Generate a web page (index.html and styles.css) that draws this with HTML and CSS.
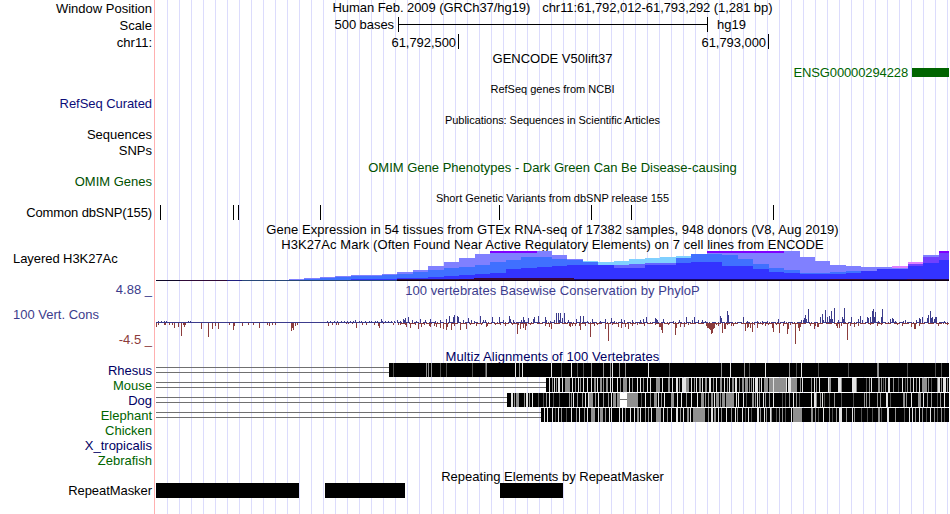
FILE: index.html
```html
<!DOCTYPE html>
<html lang="en">
<head>
<meta charset="utf-8">
<title>Genome tracks chr11:61,792,012-61,793,292</title>
<link rel="stylesheet" href="styles.css">
</head>
<body>
<main class="browser">
  <div class="row h17"><div class="label low">Window Position</div><div class="track caption position tight"><span>Human Feb. 2009 (GRCh37/hg19)</span><span>chr11:61,792,012-61,793,292 (1,281 bp)</span></div></div>
  <div class="row h18"><div class="label low">Scale</div><div class="track scale"><span class="scale-size tight">500 bases</span><i class="scale-bar"><b></b></i><span>hg19</span></div></div>
  <div class="row h16"><div class="label">chr11:</div><div class="track ruler tight"><span class="tick first">61,792,500</span><span class="tick">61,793,000</span></div></div>
  <div class="row h14"><div class="label"></div><div class="track caption">GENCODE V50lift37</div></div>
  <div class="row h16"><div class="label"></div><div class="track gene"><span class="tighter">ENSG00000294228</span><i class="exon"></i></div></div>
  <div class="row h15"><div class="label"></div><div class="track caption small">RefSeq genes from NCBI</div></div>
  <div class="row h16"><div class="label navy tight">RefSeq Curated</div></div>
  <div class="row h15"><div class="label"></div><div class="track caption small tight">Publications: Sequences in Scientific Articles</div></div>
  <div class="row h16"><div class="label">Sequences</div></div>
  <div class="row h17"><div class="label">SNPs</div></div>
  <div class="row h14"><div class="label"></div><div class="track caption green">OMIM Gene Phenotypes - Dark Green Can Be Disease-causing</div></div>
  <div class="row h16"><div class="label green">OMIM Genes</div></div>
  <div class="row h15"><div class="label"></div><div class="track caption small">Short Genetic Variants from dbSNP release 155</div></div>
  <div class="row h17"><div class="label tighter">Common dbSNP(155)</div><svg class="track" id="snps" viewBox="156 0 793 17" width="793" height="17"></svg></div>
  <div class="row h15"><div class="label"></div><div class="track caption wide">Gene Expression in 54 tissues from GTEx RNA-seq of 17382 samples, 948 donors (V8, Aug 2019)</div></div>
  <div class="row h14"><div class="label"></div><div class="track caption wide">H3K27Ac Mark (Often Found Near Active Regulatory Elements) on 7 cell lines from ENCODE</div></div>
  <div class="row h31"><div class="label left tight">Layered H3K27Ac</div><svg class="track" id="histone" viewBox="156 251 793 31" width="793" height="31"></svg></div>
  <div class="row h16"><div class="label violet">4.88 _</div><div class="track caption low wide violet">100 vertebrates Basewise Conservation by PhyloP</div></div>
  <div class="row h51"><div class="label limits"><span class="left violet">100 Vert. Cons</span><span class="brown">-4.5 _</span></div><svg class="track" id="phylop" viewBox="156 298 793 51" width="793" height="51"></svg></div>
  <div class="row h14"><div class="label"></div><div class="track caption wider blue">Multiz Alignments of 100 Vertebrates</div></div>
  <div class="row h15"><div class="label blue">Rhesus</div><svg class="track" id="rhesus" viewBox="156 0 793 15" width="793" height="15"></svg></div>
  <div class="row h15"><div class="label leaf">Mouse</div><svg class="track" id="mouse" viewBox="156 0 793 15" width="793" height="15"></svg></div>
  <div class="row h15"><div class="label blue">Dog</div><svg class="track" id="dog" viewBox="156 0 793 15" width="793" height="15"></svg></div>
  <div class="row h15"><div class="label leaf">Elephant</div><svg class="track" id="elephant" viewBox="156 0 793 15" width="793" height="15"></svg></div>
  <div class="row h15"><div class="label leaf">Chicken</div></div>
  <div class="row h15"><div class="label blue">X_tropicalis</div></div>
  <div class="row h16"><div class="label leaf">Zebrafish</div></div>
  <div class="row h14"><div class="label"></div><div class="track caption">Repeating Elements by RepeatMasker</div></div>
  <div class="row h31"><div class="label tight">RepeatMasker</div><svg class="track" id="repeats" viewBox="156 0 793 31" width="793" height="31"></svg></div>
</main>
<script src="tracks.js"></script>
</body>
</html>
```
FILE: styles.css
```css
* { box-sizing: border-box; }
body { margin: 0; background: #fff; }
.browser {
  width: 949px;
  height: 514px;
  overflow: hidden;
  color: #000;
  font: 13px/15px "Liberation Sans", Arial, sans-serif;
  background:
    linear-gradient(#ffb0b0, #ffb0b0) 154px 0 / 1px 100% no-repeat,
    repeating-linear-gradient(90deg, transparent 0 11px, #dcdcfc 11px 12px) 156px 0 / 793px 100% no-repeat;
}
.row { display: grid; grid-template-columns: 153px 793px; column-gap: 3px; align-items: start; white-space: nowrap; }
.h14 { height: 14px; }
.h15 { height: 15px; }
.h16 { height: 16px; }
.h17 { height: 17px; }
.h18 { height: 18px; }
.h31 { height: 31px; }
.h51 { height: 51px; }
.label { text-align: right; padding-right: 1px; min-height: 14px; }
.left { text-align: left; padding-left: 13px; }
.low { padding-top: 1px; }
.caption { text-align: center; }
.small { font-size: 11px; padding-top: 1px; }
.tight { letter-spacing: -0.06px; }
.tighter { letter-spacing: -0.12px; }
.wide { letter-spacing: 0.056px; }
.wider { letter-spacing: 0.08px; }
.position { display: flex; justify-content: center; gap: 12px; }
svg { display: block; shape-rendering: crispEdges; }
.scale { display: flex; }
.scale-size { width: 238px; text-align: right; }
.scale-bar { width: 310px; height: 15px; margin: 0 9px 0 4px; border: solid #000; border-width: 0 1px; }
.scale-bar b { display: block; height: 1px; margin-top: 7px; background: #000; }
.ruler { display: flex; margin-top: -1px; }
.tick { width: 310px; height: 15px; padding: 1px 2px 0 0; text-align: right; border-right: 1px solid #000; }
.first { width: 303px; }
.gene { display: flex; justify-content: flex-end; color: #006400; }
.exon { width: 37px; height: 9px; margin: 3px 0 0 4px; background: #006400; }
.limits { display: flex; flex-direction: column; padding-top: 9px; gap: 10px; }
.navy { color: #0c0c78; }
.blue { color: #000064; }
.green { color: #005000; }
.leaf { color: #006400; }
.violet { color: #3c3c8c; }
.brown { color: #8c3c3c; }
```
FILE: tracks.js
```js
const NS = "http://www.w3.org/2000/svg";
function bar(svg, x, y, w, h, fill) {
  const r = document.createElementNS(NS, "rect");
  for (const [k, v] of Object.entries({ x, y, width: w, height: h, fill })) r.setAttribute(k, v);
  svg.appendChild(r);
}
const el = id => document.getElementById(id);
const pairs = s => s.trim().split(/\s+/).map(p => p.split(":").map(Number));

// Common SNPs
[160, 233, 238, 320, 499, 591, 631, 773].forEach(x => bar(el("snps"), x, 0, 1, 15, "#000"));

// H3K27Ac: one entry per bin, pairs of layer colour and top, drawn back to front
const ink = { P: "#7f00ff", L: "#8080ff", C: "#80d0ff", M: "#4070ff", D: "#3333ff", K: "#e080ff", V: "#7040ff", U: "#6464ff" };
const bins = ("L279 L278M279 L277M278 L276M277 L275M276D279 L275M276D279 L274M275D279 L272M274D278 L270M272D278 " +
  "L266M270D277 L262M268D276 L258M267D275 L254M265D274 P251L253M262D273 P251L253M260D269 P251L253M257D268 " +
  "L251M257D267 L255M259D266 L259M260D265 C261M262D265 C262M265D265 C261U265D268 C259U264D268 C258U263D265 " +
  "C257U263D265 C256M258D263 L254M254D262 P251L253M254D262 P251L253M255D266 P251L253M259D266 P251L253M264D269 " +
  "P251L253M268D272 L251M270D273 L257M273D274 L261M273D274 L265M272D274 L266M271D273 L267D271 L267D269 " +
  "K266L268D269 K262V264D266 L255V257D263 P251V253D260").split(" ");
const edge = k => Math.round(289 + 15.47 * k);
bins.forEach((bin, k) => {
  const x = edge(k), w = Math.min(edge(k + 1), 949) - x;
  for (const [, c, y] of bin.matchAll(/([A-Z])(\d+)/g)) bar(el("histone"), x, +y, w, 281 - y, ink[c]);
});
[[156, 24, "#100828"], [180, 47, "#300a38"], [227, 15, "#202080"], [242, 155, "#284878"], [397, 552, "#100010"]]
  .forEach(([x, w, c]) => bar(el("histone"), x, 280, w, 1, c));
[[397, 62, "#301050"], [459, 115, "#3a0838"], [574, 256, "#180868"], [830, 32, "#3a0838"], [862, 45, "#180868"], [907, 16, "#3a0838"], [923, 26, "#240850"]]
  .forEach(([x, w, c]) => bar(el("histone"), x, 279, w, 1, c));
bar(el("histone"), 474, 278, 100, 1, "#3a0838");

// PhyloP scores
const up = pairs(`158:2 161:2 164:2 166:2 188:2 190:2 199:1 327:2 330:2 334:2 337:2 341:2 344:2 347:2 350:2 353:2 355:3 359:2 361:2 365:2 369:2 371:2
  375:2 377:2 381:4 382:2 385:2 388:2 391:2 394:2 397:3 400:2 403:4 404:3 405:5 408:6 412:3 416:2 420:4 425:3 430:4 435:2 440:3 446:4 449:7 453:6 454:8
  457:7 458:6 463:3 468:5 471:3 474:2 480:7 483:3 485:3 492:6 499:6 503:3 509:7 510:4 513:3 521:3 523:6 524:3 528:5 533:4 534:6 538:7 545:6 546:3 550:2
  554:3 556:10 558:10 559:3 560:10 562:5 564:10 568:3 576:4 580:7 583:7 587:2 592:4 600:2 605:4 611:5 614:2 621:4 624:3 632:3 640:3 643:4 646:6
  655:5 656:4 657:3 663:4 673:2 679:3 686:6 692:3 694:6 698:3 702:3 705:2 720:7 721:5 727:12 728:8 743:6 747:2 757:2 762:2 767:2 778:4 784:2
  801:3 803:3 804:5 805:8 806:4 808:14 820:6 822:9 823:3 825:13 827:6 829:7 830:4 831:12 832:4 834:15 838:3 842:6 843:4 844:15 851:6 858:4 860:7
  862:3 867:6 868:5 870:6 872:12 873:14 874:6 875:11 878:2 881:6 882:14 890:4 892:5 893:4 895:2 903:2 905:3 916:3 919:5 920:4 922:6 927:5 928:8
  930:12 931:5 932:6 934:4 935:6 936:6 940:1 944:2`);
const down = pairs(`156:4 158:2 164:2 165:2 169:2 172:2 174:5 178:4 181:13 183:2 184:4 185:2 201:6 208:14 212:6 215:3 218:6 229:2 233:7 234:3 242:3
  248:2 253:2 259:5 267:2 269:3 272:2 275:2 291:8 292:5 293:7 295:3 297:2 328:3 332:2 336:2 338:2 346:1 348:1 352:1 356:5 362:2 366:2 374:2 378:3 379:5
  383:1 393:2 398:2 400:2 405:2 406:4 410:5 415:2 418:6 421:4 424:2 429:3 430:4 434:3 436:4 440:5 443:6 446:7 447:4 451:7 454:3 460:7 466:6 470:2
  476:3 481:2 486:4 487:3 495:2 500:2 505:3 512:2 517:11 518:2 520:6 523:5 525:7 526:3 530:2 545:3 549:4 551:6 569:3 570:4 572:3 575:3 579:3 580:7 585:3
  590:14 594:3 597:2 605:6 608:18 612:2 618:4 621:5 625:4 628:6 632:3 637:2 644:3 655:2 659:4 660:4 661:7 662:10 668:2 675:12 676:5 680:4 684:4 688:2
  706:3 707:5 708:5 709:6 710:7 711:11 712:10 713:6 714:5 716:2 718:3 722:10 724:6 725:6 727:2 731:3 733:3 745:8 747:5 748:4 750:5 752:9 754:2 757:5
  762:2 765:3 768:2 772:5 773:9 776:2 779:10 783:3 787:11 788:6 790:2 795:21 798:5 799:8 800:4 810:3 814:6 815:3 817:4 818:4 836:3 837:5 839:5 841:3
  847:17 850:3 854:4 858:3 870:2 877:3 881:2 897:2 902:3 908:1 911:4 914:6 915:6 919:3 938:3 943:1 947:2`);
for (let x = 156; x < 949; x++) {
  const n = (x * 7919 + x * x * 31) % 17;
  if (x < 390 || n < 12) bar(el("phylop"), x, 322, 1, 1, "#3c3c8c");
  if (x > 400 && n > 5) bar(el("phylop"), x, 323, 1, 1, "#8c3c3c");
}
up.forEach(([x, h]) => bar(el("phylop"), x, 323 - h, 1, h, "#3c3c8c"));
down.forEach(([x, h]) => bar(el("phylop"), x, 323, 1, h, "#8c3c3c"));

// Alignments: stripes as x + shade + optional width, over a black block
const shade = { w: "#e4e4e4", g: "#909090", d: "#505050", k: "#000", x: "#fff" };
function alignment(id, start, stripes) {
  const svg = el(id);
  bar(svg, 156, 4, start - 156, 1, "#707070");
  bar(svg, 156, 9, start - 156, 1, "#707070");
  bar(svg, start, 0, 949 - start, 14, "#000");
  for (const [, x, c, w] of stripes.matchAll(/(\d{3})([wgdkx])(\d*)/g)) bar(svg, +x, 0, +(w || 1), 14, shade[c]);
}
alignment("rhesus", 389, `393d 426g 428g 431g 440d 446d 472d 485d 486g 515w 519g 522w 551w 561d 571w 577d 583d 591g 603g 610g 612w 619g 625g
  648w 669d 721g 730w 744g 749d 765w 789g 796d 801w 818d 848d 877g 878g 907d 935d 941d`);
alignment("mouse", 546, `549w 552g 554w 556g 558w2 562w 565g5 572w 575g 578w 580g 583w 587w 591w 594g2 597w 600g2 603g 606g2 610w 612w 617w 620g 623g4
  629w 632g 637w 640w 643g 647w 650w 656g4 662w 666k2 668g2 672w 676w2 679g 682w4 686g3 691w 694g 696w 699g2 702w 705g2
  709w2 713g 716w 720g2 724w 727g 729w 732g2 735w2 739g 742g2 745g3 749g 751g 753w 755w3 759g 761w 764g2 766g2 769g 770g16 773w 786w 788w3 791g6 800g 802w
  811g 814w 816g 819w 828w 829g2 838w3 841g 852w4 856g 866d 869g 871w 878g2 881g 883d 885g 888w2 893g 898d 902w 905d 907g 910g 913w
  916g 919w 922g5 928g 931d 937g 938w2 941g 943w2 945w 947g`);
alignment("dog", 507, `511w2 514g 516g3 524g 526w2 529g 532w 538d 543d 546g 549w 553d 559d 569g 571g 573w 577g 582g 585w 588w 589g4 595g 598w 603g
  608g 611w 613g3 617g3 620x7 627g11 641d 645w 650g 654g3 658w 661g 664w 671g3 677w 681w 686g 691w 697w 701g3 705g
  708g 711g2 714w 716g3 720g 722g3 726g3 729g5 736w 738w 743w 746d 752g2 755g 757w 759g 763w 765g 769g 773w 782d 785d 789g 793w 796g 799d
  811w 814w2 816g 820g 822w 824d 829d 834g 841d 853d 864g 866g 869g 877g 880g 886w2 890d 903g2 906g 911w 918g3 923w 927g 931g 937d 940g 944w`);
bar(el("dog"), 620, 6, 7, 1, "#707070");
alignment("elephant", 541, `544w 547w 552w 555d 558w 561g 566d 571w 576g 579w 584g 587w 591g4 598w 600g3 605g 609w 611w 619w 622w 625g 630w 634w 637g2
  640w 645g 648g 651w 656g5 663w 667g 671w 676w2 680g 683w 687g2 690w 693g12 708g 711w2 714g2 718w 721g 726w 731g 735w 737g 742w 745d 748w
  751d 757w2 760g 764w 766g 770w 771g 776d 779g 782g 785d 791w 793g9 811g2 815g 818d 823w 829g 832d 836g 839w3 846g 852w 854g 861d 867d 872d 878g2
  881d 887w2 895g 904d 909w 912w 915g 919w 922g 926d 930w 934g 937d 941g 944d`);

// Repeats
[[156, 143], [325, 80], [500, 63]].forEach(([x, w]) => bar(el("repeats"), x, 0, w, 15, "#000"));
```
